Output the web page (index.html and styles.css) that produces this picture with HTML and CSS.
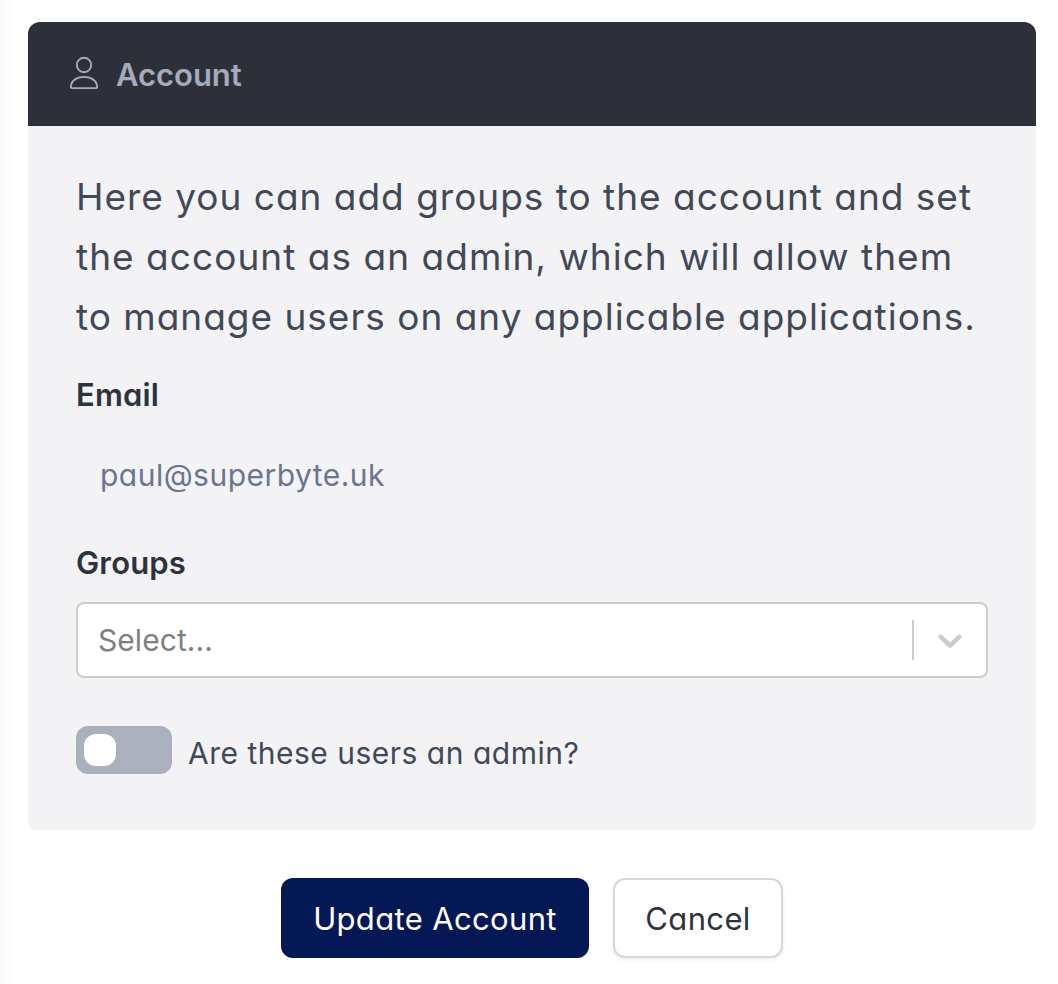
FILE: index.html
```html
<!DOCTYPE html>
<html lang="en">
<head>
<meta charset="utf-8">
<title>Account</title>
<link rel="stylesheet" href="styles.css">
</head>
<body>
<main class="page">
  <section class="card">
    <header class="card-header">
      <svg class="user-icon" width="28" height="34" viewBox="0 0 28 34" fill="none" stroke="currentColor" stroke-width="1.9" stroke-linejoin="round">
        <circle cx="14" cy="9" r="7.2"/>
        <path d="M2 32.1h24a1.1 1.1 0 0 0 1.1-1.1c0-6-5.200-10.100-13.100-10.100S.9 25 .9 31A1.100 1.100 0 0 0 2 32.100Z"/>
      </svg>
      <h1 class="card-title">Account</h1>
    </header>
    <div class="card-body">
      <p class="intro">Here you can add groups to the account and set<br><span class="wide">the account as an admin, which will allow them</span><br>to manage users on any applicable applications.</p>
      <div class="label label-email">Email</div>
      <div class="email">paul@superbyte.uk</div>
      <div class="label label-groups">Groups</div>
      <div class="select">
        <span class="placeholder">Select...</span>
        <span class="divider"></span>
        <svg class="chevron" width="40" height="40" viewBox="0 0 20 20" fill="#ccc"><path d="M4.516 7.548c0.436-0.446 1.043-0.481 1.576 0l3.908 3.747 3.908-3.747c0.533-0.481 1.141-0.446 1.574 0 0.436 0.445 0.408 1.197 0 1.615-0.406 0.418-4.695 4.502-4.695 4.502-0.217 0.223-0.502 0.335-0.787 0.335s-0.570-0.112-0.789-0.335c0 0-4.287-4.084-4.695-4.502s-0.436-1.170 0-1.615z"/></svg>
      </div>
      <div class="toggle-row">
        <span class="toggle"><span class="knob"></span></span>
        <span class="toggle-label">Are these users an admin?</span>
      </div>
    </div>
  </section>
  <div class="actions">
    <button class="btn btn-primary">Update Account</button>
    <button class="btn btn-secondary">Cancel</button>
  </div>
</main>
</body>
</html>
```
FILE: styles.css
```css
* { box-sizing: border-box; }
body {
  margin: 0;
  background: linear-gradient(to right, #fafafa, #fff 14px);
  font-family: Inter, "Liberation Sans", sans-serif;
  font-feature-settings: "cv11" 1;
  font-weight: 400;
  color: #414856;
}
.page { height: 984px; padding: 22px 22px 0 28px; overflow: hidden; }
.card { height: 808px; border-radius: 12px 12px 8px 8px; overflow: hidden; background: #f3f3f6; }
.card-header { display: flex; align-items: center; height: 104px; padding: 0 42px; gap: 18px; background: #2d3039; color: #a5abba; }
.user-icon { display: block; margin-bottom: 2px; }
.card-title { margin: 2px 0 0; font-size: 31px; line-height: 40px; font-weight: 600; letter-spacing: -.05px; }
.card-body { padding: 41px 48px 0; }
.intro { margin: 0; font-size: 37px; line-height: 60px; letter-spacing: .99px; white-space: nowrap; }
.wide { letter-spacing: 1.04px; }
.label { color: #2d333c; font-size: 31px; line-height: 40px; font-weight: 600; letter-spacing: .15px; }
.label-email { margin-top: 28px; }
.email { margin-top: 40px; padding-left: 24px; font-size: 30px; line-height: 40px; letter-spacing: .48px; color: #6b758f; }
.label-groups { margin-top: 48px; }
.select { display: flex; align-items: center; height: 76px; margin-top: 19px; padding: 0 16px 0 20px; border: 2px solid #ccc; border-radius: 8px; background: #fff; }
.placeholder { flex: 1; font-size: 30px; letter-spacing: .05px; color: #808080; }
.divider { width: 2px; height: 40px; background: #ccc; margin-right: 16px; }
.toggle-row { display: flex; align-items: center; gap: 16px; height: 48px; margin-top: 48px; }
.toggle { width: 96px; height: 48px; padding: 8px; border-radius: 12px; background: #aab0bd; }
.knob { display: block; width: 32px; height: 32px; border-radius: 12px; background: #fff; }
.toggle-label { padding-top: 6px; font-size: 30px; line-height: 40px; letter-spacing: .5px; white-space: nowrap; }
.actions { display: flex; justify-content: center; gap: 24px; margin-top: 48px; }
.btn { height: 80px; padding: 0; border-radius: 12px; font: inherit; font-size: 31px; font-feature-settings: inherit; letter-spacing: .35px; white-space: nowrap; }
.btn-primary { width: 308px; border: 0; background: #051856; color: #fff; }
.btn-secondary { width: 170px; border: 2px solid #d4d7de; background: #fff; color: #2f333e; box-shadow: 0 2px 4px rgba(0, 0, 0, .06); }
```
